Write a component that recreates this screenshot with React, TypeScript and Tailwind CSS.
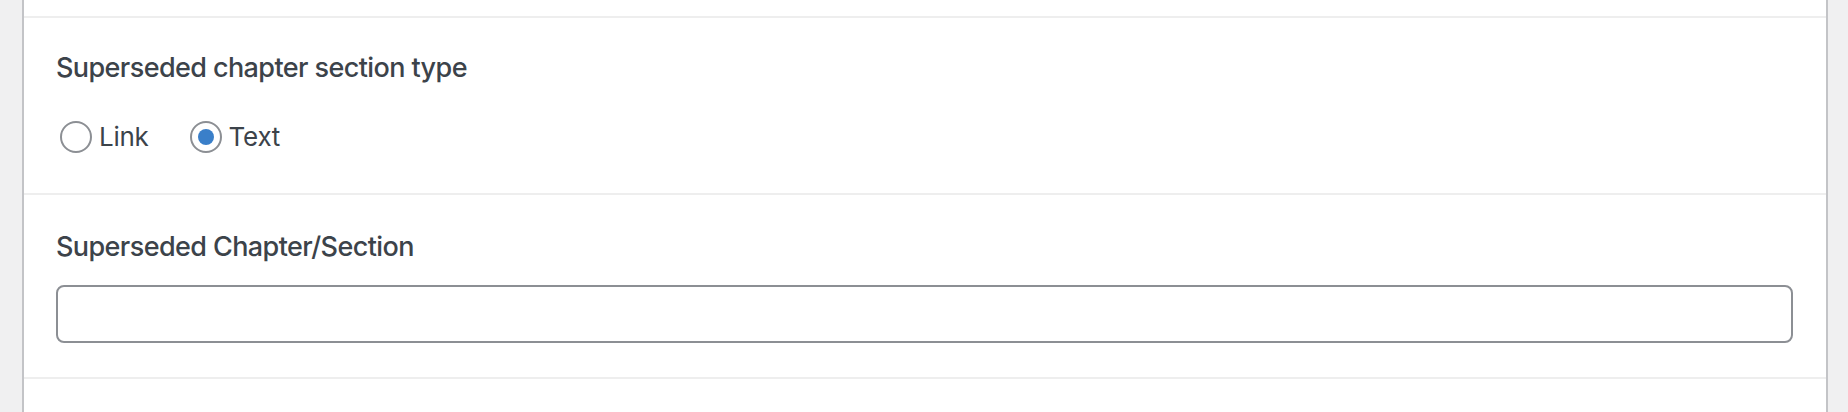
import React, { useState } from 'react';

const font = { fontFamily: 'Inter, "Liberation Sans", sans-serif' };

const RadioOption = ({ label, checked, onSelect }: { label: string; checked: boolean; onSelect: () => void }) => (
    <label onClick={onSelect} className="flex items-center gap-[7px] cursor-pointer">
        <span className="w-[32px] h-[32px] rounded-full border-2 border-[#8c8f94] bg-white flex items-center justify-center">
            {checked && <span className="w-[16px] h-[16px] rounded-full bg-[#3a7fc9]" />}
        </span>
        <span className="text-[26px] leading-[32px] tracking-[-0.01em] text-[#3c434a]">{label}</span>
    </label>
);

const App = () => {
    const [type, setType] = useState<'link' | 'text'>('text');
    const [value, setValue] = useState('');

    return (
        <div className="flex min-h-[412px] bg-[#f0f0f1] pl-[22px] pr-[20px]" style={font}>
            <div className="flex-1 bg-white border-x-2 border-[#c3c4c7] pt-[16px]">
                {/* section type */}
                <div className="border-t-2 border-[#eeeeee] pt-[30px] pb-[40px] pl-[32px] pr-[33px]">
                    <div className="text-[27px] leading-[40px] font-medium tracking-[-0.022em] text-[#3c434a]">Superseded chapter section type</div>
                    <div className="flex items-center gap-[41px] mt-[33px] ml-[4px]">
                        <RadioOption label="Link" checked={type === 'link'} onSelect={() => setType('link')} />
                        <RadioOption label="Text" checked={type === 'text'} onSelect={() => setType('text')} />
                    </div>
                </div>

                {/* chapter / section */}
                <div className="border-t-2 border-[#eeeeee] pt-[32px] pb-[34px] pl-[32px] pr-[33px]">
                    <div className="text-[27px] leading-[40px] font-medium tracking-[-0.022em] text-[#3c434a]">Superseded Chapter/Section</div>
                    <input
                        value={value}
                        onChange={(e) => setValue(e.target.value)}
                        className="block w-full h-[58px] mt-[18px] rounded-[8px] border-2 border-[#8c8f94] px-[16px] text-[26px] text-[#2c3338] outline-none"
                    />
                </div>

                <div className="border-t-2 border-[#eeeeee]" />
            </div>
        </div>
    );
};

export default App;
